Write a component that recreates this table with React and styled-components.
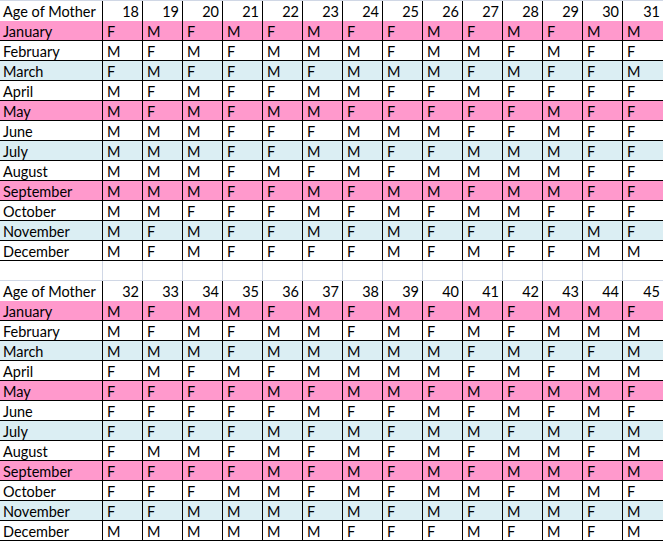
import React from "react";
import styled, { createGlobalStyle } from "styled-components";

const GlobalStyle = createGlobalStyle`
  html, body { margin: 0; padding: 0; background: #ffffff; }
  body { font-family: Lato, "Liberation Sans", sans-serif; color: #000; }
`;

const MONTHS = [
  "January", "February", "March", "April", "May", "June",
  "July", "August", "September", "October", "November", "December",
];

const FILLS = ["pink", "white", "blue", "white"];

const TOP_AGES = [18, 19, 20, 21, 22, 23, 24, 25, 26, 27, 28, 29, 30, 31];
const BOTTOM_AGES = [32, 33, 34, 35, 36, 37, 38, 39, 40, 41, 42, 43, 44, 45];

const TOP_DATA = [
  "FMFMFMFFMFMFMM",
  "MFMFMMMFMMFMFF",
  "FMFFMFMMMFMFFM",
  "MFMFFMMFFMFFFF",
  "MFMFMMFFFFFMFF",
  "MMMFFFMMMFFMFF",
  "MMMFFMMFFMMMFF",
  "MMMFMFMFMMMMFF",
  "MMMFFMFMMFMMFF",
  "MMFFFMFMFMMFFF",
  "MFMFFMFMFFFFMF",
  "MFMFFFFMFMFFMM",
];

const BOTTOM_DATA = [
  "MFMMFMFMFMFMMF",
  "MFMFMMFMFMFMMM",
  "MMMFMMMMMFMFFM",
  "FMFMFMMMMFMFMM",
  "FFFFMFMMFMFMMF",
  "FFFFFMFFMFMFMF",
  "FFFFMFMFMMFMFM",
  "FMMFMFMFMFMMFM",
  "FFFFMFMFMFMMFM",
  "FFFMMFMFMMFMMF",
  "FFMMMFMFMFMMFM",
  "MMMMMMFFFMFMFM",
];

const FILL_COLORS = {
  pink: "#ff99cc",
  blue: "#dbeef3",
  white: "#ffffff",
};

const Sheet = styled.div`
  width: 663px;
  height: 541px;
  overflow: hidden;
  display: flex;
  flex-direction: column;
  font-size: 14.5px;
  line-height: 1;
`;

const Row = styled.div`
  display: grid;
  grid-template-columns: 102px repeat(13, 40px) 41px;
  height: ${(p) => p.$height}px;
  box-sizing: border-box;
  background: ${(p) => FILL_COLORS[p.$fill] || "#ffffff"};
  border-top: ${(p) => (p.$gridTop ? "1px solid #d0d7e5" : "none")};
  border-bottom: ${(p) =>
    p.$line === "black"
      ? "1px solid #000"
      : p.$line === "grid"
      ? "1px solid #d0d7e5"
      : "none"};
`;

const Cell = styled.div`
  box-sizing: border-box;
  display: flex;
  align-items: center;
  padding-top: 3px;
  white-space: nowrap;
  justify-content: ${(p) => (p.$right ? "flex-end" : "flex-start")};
  padding-left: ${(p) => (p.$first ? 3 : 4)}px;
  padding-right: ${(p) => (p.$right ? 3 : 0)}px;
  border-left: ${(p) =>
    p.$first ? "none" : p.$faint ? "1px solid #d0d7e5" : "1px solid #000"};
`;

function HeaderRow({ ages, gridTop }) {
  return (
    <Row $height={gridTop ? 21 : 20} $gridTop={gridTop} $fill="white">
      <Cell $first>Age of Mother</Cell>
      {ages.map((a) => (
        <Cell key={a} $right>
          {a}
        </Cell>
      ))}
    </Row>
  );
}

function MonthRows({ data }) {
  return data.map((row, i) => (
    <Row key={MONTHS[i]} $height={20} $fill={FILLS[i % 4]} $line="black">
      <Cell $first>{MONTHS[i]}</Cell>
      {row.split("").map((v, j) => (
        <Cell key={j}>{v}</Cell>
      ))}
    </Row>
  ));
}

function GapRow() {
  return (
    <Row $height={20} $fill="white" $line="grid">
      <Cell $first />
      {TOP_AGES.map((a) => (
        <Cell key={a} $faint />
      ))}
    </Row>
  );
}

export default function App() {
  return (
    <>
      <GlobalStyle />
      <Sheet>
        <HeaderRow ages={TOP_AGES} gridTop />
        <MonthRows data={TOP_DATA} />
        <GapRow />
        <HeaderRow ages={BOTTOM_AGES} />
        <MonthRows data={BOTTOM_DATA} />
      </Sheet>
    </>
  );
}
